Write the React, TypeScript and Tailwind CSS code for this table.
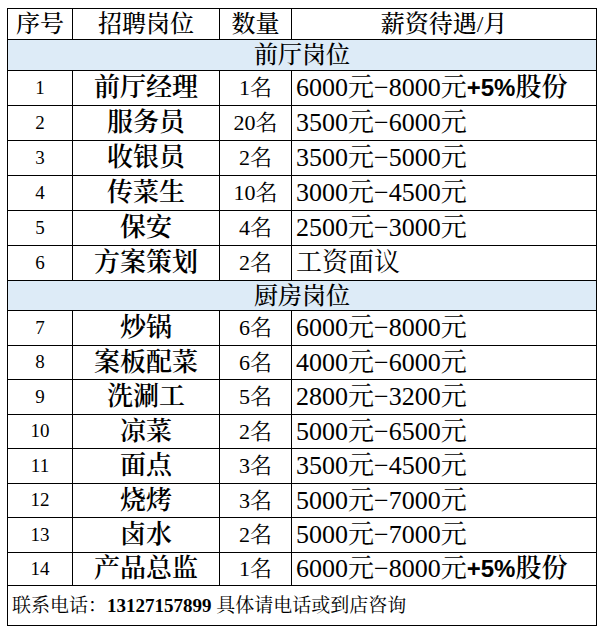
const font = "font-['Liberation_Serif','Noto_Serif_CJK_SC','Noto_Sans_CJK_SC',serif]";

type Row = { no: number; job: string; qty: string; pay: string; bonus?: boolean; h: string };

const front: Row[] = [
  { no: 1, job: "前厅经理", qty: "1名", pay: "6000元−8000元", bonus: true, h: "h-[35px]" },
  { no: 2, job: "服务员", qty: "20名", pay: "3500元−6000元", h: "h-[35px]" },
  { no: 3, job: "收银员", qty: "2名", pay: "3500元−5000元", h: "h-[35px]" },
  { no: 4, job: "传菜生", qty: "10名", pay: "3000元−4500元", h: "h-[35px]" },
  { no: 5, job: "保安", qty: "4名", pay: "2500元−3000元", h: "h-[35px]" },
  { no: 6, job: "方案策划", qty: "2名", pay: "工资面议", h: "h-[35px]" },
];

const kitchen: Row[] = [
  { no: 7, job: "炒锅", qty: "6名", pay: "6000元−8000元", h: "h-[35px]" },
  { no: 8, job: "案板配菜", qty: "6名", pay: "4000元−6000元", h: "h-[34px]" },
  { no: 9, job: "洗涮工", qty: "5名", pay: "2800元−3200元", h: "h-[35px]" },
  { no: 10, job: "凉菜", qty: "2名", pay: "5000元−6500元", h: "h-[34px]" },
  { no: 11, job: "面点", qty: "3名", pay: "3500元−4500元", h: "h-[35px]" },
  { no: 12, job: "烧烤", qty: "3名", pay: "5000元−7000元", h: "h-[34px]" },
  { no: 13, job: "卤水", qty: "2名", pay: "5000元−7000元", h: "h-[35px]" },
  { no: 14, job: "产品总监", qty: "1名", pay: "6000元−8000元", bonus: true, h: "h-[33px]" },
];

const cell = "border border-black p-0";

function JobRow({ r }: { r: Row }) {
  return (
    <tr className={r.h}>
      <td className={`${cell} text-center text-[19px]`}>{r.no}</td>
      <td className={`${cell} text-center text-[26px] font-semibold leading-none`}>{r.job}</td>
      <td className={`${cell} text-center text-[22px] leading-none`}>{r.qty}</td>
      <td className={`${cell} pl-[4px] text-[26px] leading-none whitespace-nowrap`}>
        {r.pay}
        {r.bonus && (
          <>
            <span className="font-['Liberation_Sans',sans-serif] text-[24px] font-bold">+5%</span>
            <span className="font-semibold">股份</span>
          </>
        )}
      </td>
    </tr>
  );
}

function Band({ title, h }: { title: string; h: string }) {
  return (
    <tr className={`${h} bg-[#ddebf7]`}>
      <td colSpan={4} className={`${cell} text-center text-[24px] font-medium leading-none`}>
        {title}
      </td>
    </tr>
  );
}

export default function App() {
  return (
    <div className={`w-[602px] h-[632px] bg-white pl-[7px] pt-[8px] text-black ${font}`}>
      <table className="table-fixed border-collapse w-[589px]">
        <colgroup>
          <col className="w-[65px]" />
          <col className="w-[147px]" />
          <col className="w-[72px]" />
          <col className="w-[305px]" />
        </colgroup>
        <tbody>
          <tr className="h-[31px] font-medium">
            <td className={`${cell} text-center text-[24px] leading-none`}>序号</td>
            <td className={`${cell} text-center text-[24px] leading-none`}>招聘岗位</td>
            <td className={`${cell} text-center text-[24px] leading-none`}>数量</td>
            <td className={`${cell} text-center text-[24px] leading-none`}>薪资待遇/月</td>
          </tr>
          <Band title="前厅岗位" h="h-[31px]" />
          {front.map((r) => (
            <JobRow key={r.no} r={r} />
          ))}
          <Band title="厨房岗位" h="h-[30px]" />
          {kitchen.map((r) => (
            <JobRow key={r.no} r={r} />
          ))}
          <tr className="h-[40px]">
            <td colSpan={4} className={`${cell} pl-[4px] text-[19px] leading-none`}>
              联系电话：<span className="font-bold">13127157899</span> 具体请电话或到店咨询
            </td>
          </tr>
        </tbody>
      </table>
    </div>
  );
}
